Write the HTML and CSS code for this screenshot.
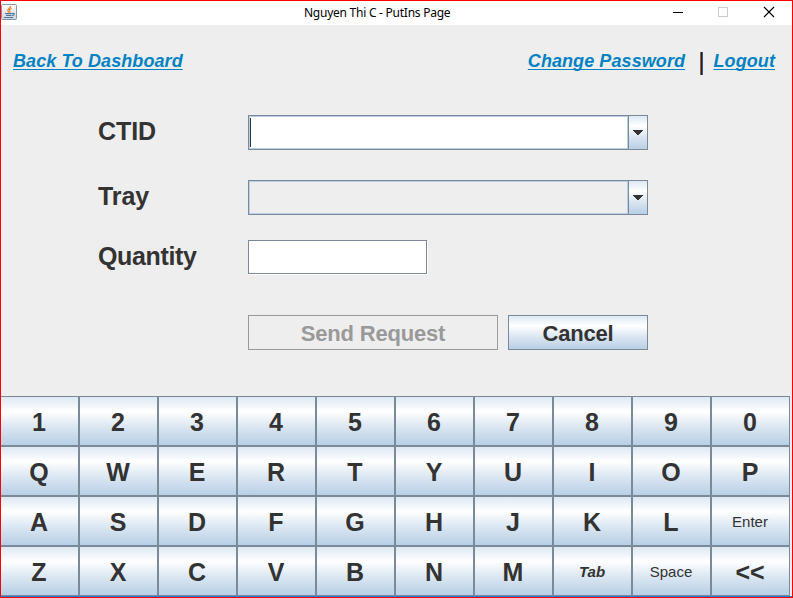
FILE: index.html
```html
<!DOCTYPE html>
<html lang="en">
<head>
<meta charset="utf-8">
<title>Nguyen Thi C - PutIns Page</title>
<link rel="stylesheet" href="styles.css">
</head>
<body>
<div class="window">
  <header class="titlebar">
    <svg class="app-icon" width="16" height="16" viewBox="0 0 16 16">
      <defs><linearGradient id="tile" x1="0" y1="0" x2="0" y2="1"><stop offset="0" stop-color="#fff"/><stop offset="1" stop-color="#c9d3db"/></linearGradient></defs>
      <rect x=".5" y=".5" width="15" height="15" rx="1" fill="url(#tile)" stroke="#8799a8"/>
      <path d="M9.6 2C10 4 6.6 4.500 6.800 6.500 6.900 7.400 7.800 7.800 7.900 8.700M10.500 4.500C8.500 5.300 8 6 8.800 7 9.200 7.600 8.900 8.200 8.500 8.700" fill="none" stroke="#ee8428" stroke-width="1.200"/>
      <path d="M4 9.500H11M5 11.300H10.500M3 13.500H12M11 9.500C14 8.500 14 11 11 11.500" fill="none" stroke="#50789a" stroke-width="1.200"/>
    </svg>
    <h1 class="title">Nguyen Thi C - PutIns Page</h1>
    <svg class="controls" width="104" height="14" viewBox="0 0 104 14" shape-rendering="crispEdges">
      <path d="M0 8.500H10" stroke="#000"/>
      <rect x="45.500" y="3.500" width="9" height="9" fill="none" stroke="#ccc"/>
      <path d="M91 3L101 13M101 3L91 13" stroke="#000" stroke-width="1.100" shape-rendering="auto"/>
    </svg>
  </header>
  <nav class="links">
    <a class="link">Back To Dashboard</a>
    <a class="link link-password">Change Password</a>
    <span class="divider"></span>
    <a class="link">Logout</a>
  </nav>
  <main class="form">
    <label class="label">CTID</label>
    <div class="combo"><div class="combo-field editable"><span class="caret"></span></div><div class="combo-button"><svg width="10" height="5" shape-rendering="crispEdges"><path d="M0 0H10V1H9V2H8V3H7V4H6V5H4V4H3V3H2V2H1V1H0Z" fill="#333"/></svg></div></div>
    <label class="label">Tray</label>
    <div class="combo"><div class="combo-field"></div><div class="combo-button"><svg width="10" height="5" shape-rendering="crispEdges"><path d="M0 0H10V1H9V2H8V3H7V4H6V5H4V4H3V3H2V2H1V1H0Z" fill="#333"/></svg></div></div>
    <label class="label label-quantity">Quantity</label>
    <div class="quantity"></div>
    <div class="actions">
      <div class="button disabled">Send Request</div>
      <div class="button">Cancel</div>
    </div>
  </main>
  <section class="keyboard">
    <div class="key">1</div><div class="key">2</div><div class="key">3</div><div class="key">4</div><div class="key">5</div><div class="key">6</div><div class="key">7</div><div class="key">8</div><div class="key">9</div><div class="key">0</div>
    <div class="key">Q</div><div class="key">W</div><div class="key">E</div><div class="key">R</div><div class="key">T</div><div class="key">Y</div><div class="key">U</div><div class="key">I</div><div class="key">O</div><div class="key">P</div>
    <div class="key">A</div><div class="key">S</div><div class="key">D</div><div class="key">F</div><div class="key">G</div><div class="key">H</div><div class="key">J</div><div class="key">K</div><div class="key">L</div><div class="key small">Enter</div>
    <div class="key">Z</div><div class="key">X</div><div class="key">C</div><div class="key">V</div><div class="key">B</div><div class="key">N</div><div class="key">M</div><div class="key tab">Tab</div><div class="key small">Space</div><div class="key">&lt;&lt;</div>
  </section>
  <div class="window-edge"></div>
</div>
</body>
</html>
```
FILE: styles.css
```css
* { box-sizing: border-box; }
body { margin: 0; font-family: "Liberation Sans", Arial, sans-serif; color: #333; }
.window {
  width: 793px; height: 598px; border: 1px solid #f00; background: #eee;
  overflow: hidden; display: flex; flex-direction: column;
}
.titlebar { height: 24px; flex: none; background: #fff; display: flex; align-items: flex-start; }
.app-icon { margin-top: 3px; }
.title {
  margin: 0 0 0 287px; width: 160px; white-space: nowrap;
  font: 12px/23px "Noto Sans", "Open Sans", sans-serif; letter-spacing: -0.25px; color: #000;
}
.controls { margin: 3px 0 0 209px; }
.links { display: flex; height: 90px; padding: 24px 17px 0 12px; flex: none; }
.link {
  font-size: 18px; line-height: 24px; font-weight: bold; font-style: italic; color: #0282c3;
  letter-spacing: 0.08px;
  text-decoration: underline; text-decoration-thickness: 1px; text-underline-offset: 2px;
  text-decoration-skip-ink: none;
}
.link-password { margin-left: auto; }
.divider { width: 3px; height: 23px; margin: 3px 10.500px 0 15px; background: linear-gradient(90deg, #a0622d 33.3%, #241c30 33.3% 66.7%, #2d5a90 66.7%); }
.form {
  height: 281px; flex: none; padding-left: 97px; display: grid;
  grid-template-columns: 150px 400px; grid-template-rows: 65px 60px 75px 35px; align-items: start;
}
.label { font-size: 25px; line-height: 32px; font-weight: bold; letter-spacing: -0.1px; }
.label-quantity { letter-spacing: -0.35px; }
.combo { height: 35px; display: flex; border: 1px solid #7a8a99; }
.combo-field { flex: 1; border: 1px solid #b8cfe5; padding: 1px 0 0; }
.editable { background: #fff; }
.caret { display: block; width: 1px; height: 29px; background: #333; }
.combo-button {
  width: 19px; border-left: 1px solid #7a8a99; display: flex; align-items: center; justify-content: center;
}
.combo-button, .button, .key {
  background-image: linear-gradient(#dde8f3 0%, #fff 30%, #dde8f3 60%, #b8cfe5 100%);
}
.quantity {
  width: 179px; height: 34px; background: #fff; border: 1px solid #7a8a99;
  box-shadow: 1px 1px #fff;
}
.actions { grid-column: 2; display: flex; gap: 10px; }
.button {
  width: 140px; height: 35px; border: 1px solid #7a8a99; text-align: center;
  font-size: 22px; line-height: 35px; font-weight: bold; letter-spacing: -0.2px;
}
.disabled { width: 250px; color: #999; border-color: #999; background: none; }
.keyboard {
  width: 790px; margin-left: -1px; flex: none; display: grid;
  grid-template-columns: repeat(10, 79px); grid-auto-rows: 50px;
}
.key {
  border: 1px solid #7a8a99; font-size: 25px; line-height: 50px; font-weight: bold; text-align: center;
  padding-right: 1px;
}
.small { font-size: 15px; font-weight: normal; }
.tab { font-size: 15px; font-style: italic; }
.window-edge { height: 1px; flex: none; background: #1883d7; }
```
